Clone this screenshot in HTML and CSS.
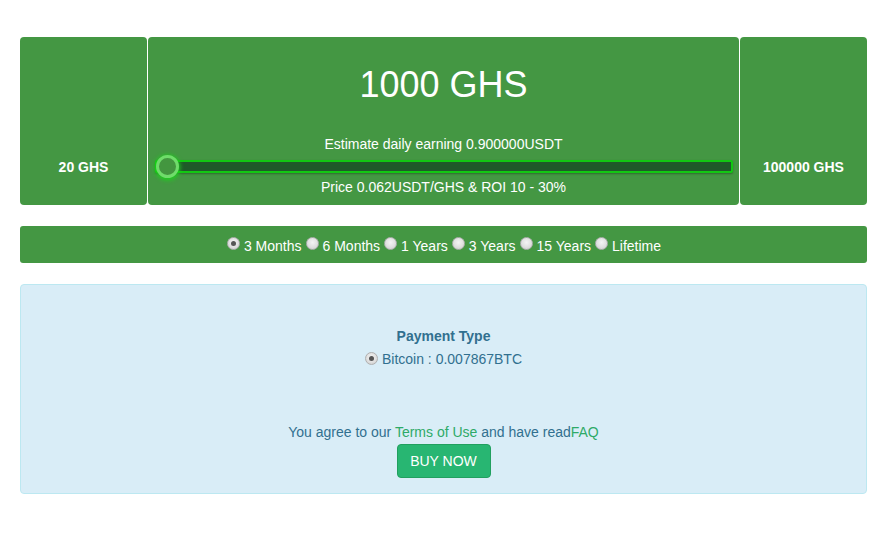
FILE: index.html
```html
<!DOCTYPE html>
<html>
<head>
<meta charset="utf-8">
<link rel="stylesheet" href="styles.css">
</head>
<body>
<div class="page">
  <div class="calc">
    <div class="cell side">20 GHS</div>
    <div class="cell main">
      <div class="amount">1000 GHS</div>
      <div class="line">Estimate daily earning 0.900000USDT</div>
      <div class="slider">
        <div class="track"></div>
        <div class="thumb"></div>
      </div>
      <div class="line">Price 0.062USDT/GHS &amp; ROI 10 - 30%</div>
    </div>
    <div class="cell side">100000 GHS</div>
  </div>

  <div class="periods">
    <label class="opt"><span class="radio checked"></span> 3 Months</label>
    <label class="opt"><span class="radio"></span> 6 Months</label>
    <label class="opt"><span class="radio"></span> 1 Years</label>
    <label class="opt"><span class="radio"></span> 3 Years</label>
    <label class="opt"><span class="radio"></span> 15 Years</label>
    <label class="opt"><span class="radio"></span> Lifetime</label>
  </div>

  <div class="info">
    <div class="ptitle">Payment Type</div>
    <div class="pay"><span class="radio checked"></span> Bitcoin : 0.007867BTC</div>
    <div class="agree">You agree to our <a class="lnk">Terms of Use</a> and have read<a class="lnk">FAQ</a></div>
    <button class="buy">BUY NOW</button>
  </div>
</div>
</body>
</html>
```

FILE: styles.css
```css
* { box-sizing: border-box; }
html, body { margin: 0; padding: 0; background: #fff; }
body { font-family: "Liberation Sans", Arial, sans-serif; font-size: 14px; color: #fff; }
.page { padding: 37px 27px 0 20px; }

.calc { display: flex; gap: 1px; height: 168px; }
.cell { background: #449743; border-radius: 4px; }
.side { width: 127px; display: flex; align-items: flex-end; justify-content: center; font-weight: bold; font-size: 14px; line-height: 16px; padding-bottom: 30px; }
.main { flex: 1; display: flex; flex-direction: column; align-items: center; padding-top: 28px; }
.amount { font-size: 36px; line-height: 40px; height: 40px; margin-bottom: 31px; }
.line { font-size: 14px; line-height: 16px; }
.slider { position: relative; width: 578px; height: 22px; margin: 3px 0 2px 1px; }
.track { position: absolute; left: 0; right: 0; top: 5px; height: 13px; background: #1f5a29; border: 2px solid #12c812; border-radius: 2px; box-shadow: 0 1px 2px rgba(0,0,0,0.3); }
.thumb { position: absolute; left: 1px; top: 0; width: 23px; height: 23px; border-radius: 50%; background: #43963f; border: 3px solid #6fdc6a; box-shadow: 0 1px 4px 1px #1bd41b; }

.periods { margin-top: 21px; height: 37px; background: #449743; border-radius: 3px; display: flex; justify-content: center; align-items: center; padding-top: 2px; padding-left: 1px; font-size: 14px; }
.opt { display: inline-flex; align-items: center; margin-right: 4px; }
.opt:last-child { margin-right: 0; }
.radio { display: inline-block; width: 13px; height: 13px; border-radius: 50%; background: radial-gradient(circle at 50% 40%, #f4f4f4 0%, #e0e0e0 55%, #c8c8c8 100%); border: 1px solid #b0b0b0; margin-right: 4px; position: relative; top: -2px; }
.radio.checked::after { content: ""; position: absolute; left: 3px; top: 3px; width: 5px; height: 5px; border-radius: 50%; background: #555; }

.info { margin-top: 21px; height: 210px; background: #d9edf7; border: 1px solid #bce8f1; border-radius: 4px; color: #31708f; display: flex; flex-direction: column; align-items: center; padding-top: 43px; }
.ptitle { font-weight: bold; line-height: 16px; margin-bottom: 7px; }
.pay { line-height: 16px; display: flex; align-items: center; }
.pay .radio { top: -1px; }
.agree { margin-top: 57px; line-height: 16px; }
.lnk { color: #2eaa68; text-decoration: none; }
.buy { margin-top: 4px; width: 94px; height: 34px; background: #28b672; border: 1px solid #21a05f; border-radius: 4px; color: #fff; font-family: "Liberation Sans", Arial, sans-serif; font-size: 14px; padding: 0; }
```
